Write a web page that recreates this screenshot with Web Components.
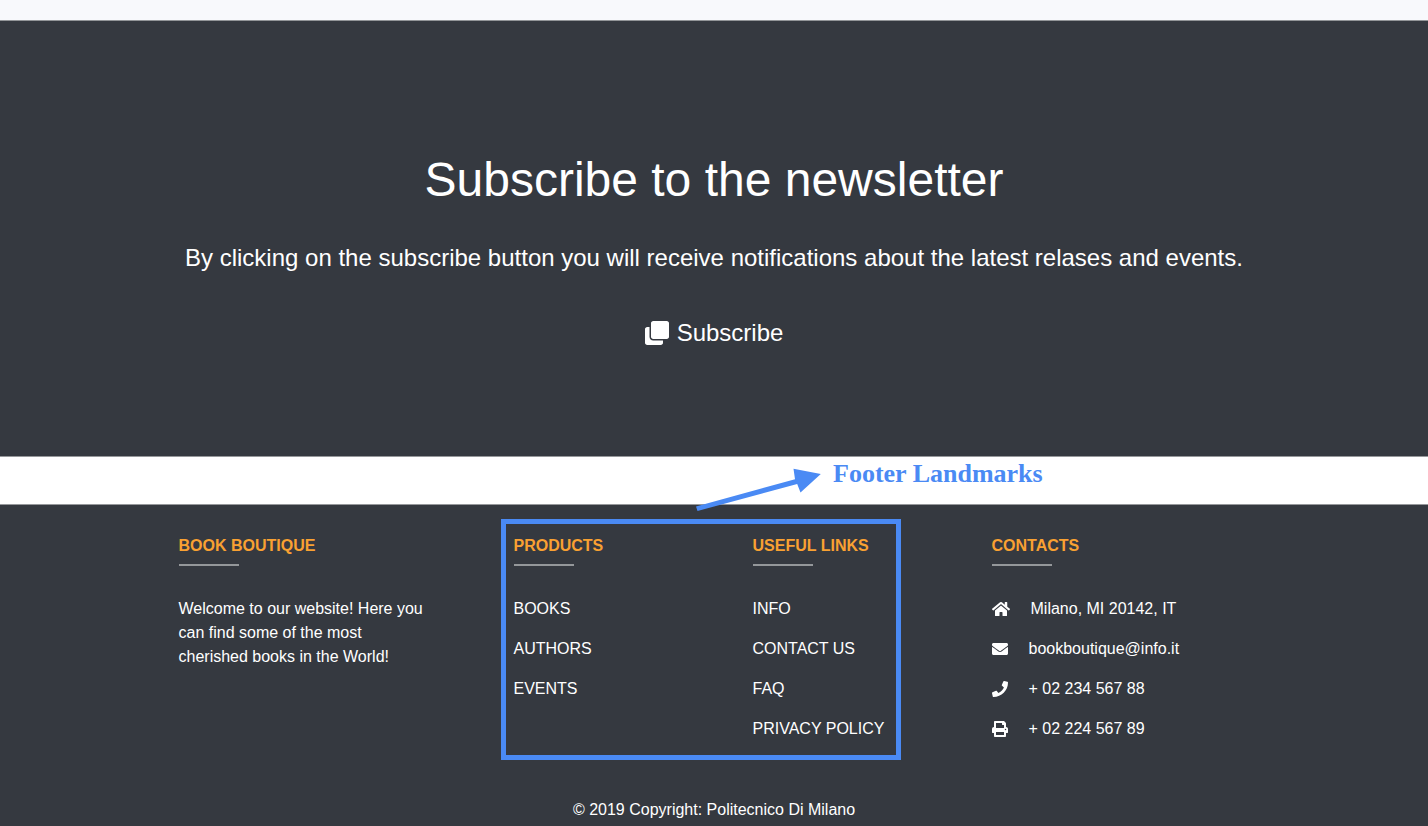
<!DOCTYPE html>
<html lang="en">
<head>
<meta charset="utf-8">
<meta name="viewport" content="width=device-width, initial-scale=1">
<title>Book Boutique</title>
<style>
body { margin: 0; background: #fff; color: #fff; font: 16px/24px "Liberation Sans", Arial, sans-serif; --dark: #353940; --accent: #f9a132; --note: #4a8af4; }
</style>
</head>
<body>
<book-page></book-page>
<script>
const define = (name, html) => {
  const t = document.createElement('template');
  t.innerHTML = html;
  customElements.define(name, class extends HTMLElement {
    constructor() {
      super();
      this.attachShadow({ mode: 'open' }).append(t.content.cloneNode(true));
    }
  });
};

const ICONS = {
  clone: ['0 0 512 512', 'M464 0c26.51 0 48 21.49 48 48v288c0 26.51-21.49 48-48 48H176c-26.51 0-48-21.49-48-48V48c0-26.51 21.49-48 48-48h288M176 416c-44.112 0-80-35.888-80-80V128H48c-26.51 0-48 21.49-48 48v288c0 26.51 21.49 48 48 48h288c26.51 0 48-21.49 48-48v-48H176z'],
  home: ['0 0 576 512', 'M280.37 148.26L96 300.11V464a16 16 0 0 0 16 16l112.06-.29a16 16 0 0 0 15.92-16V368a16 16 0 0 1 16-16h64a16 16 0 0 1 16 16v95.64a16 16 0 0 0 16 16.05L464 480a16 16 0 0 0 16-16V300L295.67 148.26a12.19 12.19 0 0 0-15.3 0zM571.6 251.47L488 182.56V44.05a12 12 0 0 0-12-12h-56a12 12 0 0 0-12 12v72.61L318.47 43a48 48 0 0 0-61 0L4.34 251.47a12 12 0 0 0-1.6 16.9l25.5 31A12 12 0 0 0 45.15 301l235.22-193.74a12.19 12.19 0 0 1 15.3 0L530.9 301a12 12 0 0 0 16.9-1.6l25.5-31a12 12 0 0 0-1.7-16.93z'],
  envelope: ['0 0 512 512', 'M502.3 190.8c3.9-3.1 9.7-.2 9.7 4.7V400c0 26.5-21.5 48-48 48H48c-26.5 0-48-21.5-48-48V195.6c0-5 5.7-7.8 9.7-4.7 22.4 17.4 52.1 39.5 154.1 113.6 21.1 15.4 56.7 47.8 92.2 47.6 35.7.3 72-32.8 92.3-47.6 102-74.1 131.6-96.3 154-113.7zM256 320c23.2.4 56.6-29.2 73.4-41.4 132.7-96.3 142.8-104.7 173.4-128.7 5.8-4.5 9.2-11.5 9.2-18.9v-19c0-26.5-21.5-48-48-48H48c-26.5 0-48 21.5-48 48v19c0 7.4 3.4 14.3 9.2 18.9 30.6 23.9 40.7 32.4 173.4 128.7 16.8 12.2 50.2 41.8 73.4 41.4z'],
  phone: ['0 0 512 512', 'M493.4 24.6l-104-24c-11.3-2.6-22.9 3.3-27.5 13.9l-48 112c-4.2 9.8-1.4 21.3 6.9 28l60.6 49.6c-36 76.7-98.9 140.5-177.2 177.2l-49.6-60.6c-6.8-8.3-18.2-11.1-28-6.9l-112 48C3.9 366.5-2 378.1.6 389.4l24 104C27.1 504.2 36.7 512 48 512c256.1 0 464-207.5 464-464 0-11.2-7.7-20.9-18.6-23.4z'],
  print: ['0 0 512 512', 'M448 192V77.25c0-8.49-3.37-16.62-9.37-22.63L393.37 9.37c-6-6-14.14-9.37-22.63-9.37H96C78.33 0 64 14.33 64 32v160c-35.35 0-64 28.65-64 64v112c0 8.84 7.16 16 16 16h48v96c0 17.67 14.33 32 32 32h320c17.67 0 32-14.33 32-32v-96h48c8.84 0 16-7.16 16-16V256c0-35.35-28.65-64-64-64zm-64 256H128v-96h256v96zm0-224H128V64h192v48c0 8.84 7.16 16 16 16h48v96zm48 72c-13.25 0-24-10.75-24-24 0-13.26 10.75-24 24-24s24 10.74 24 24c0 13.25-10.75 24-24 24z']
};

customElements.define('fa-icon', class extends HTMLElement {
  constructor() { super(); this.attachShadow({ mode: 'open' }); }
  connectedCallback() {
    const [box, d] = ICONS[this.getAttribute('name')];
    this.shadowRoot.innerHTML = `<style>:host{display:inline-flex;flex:none}svg{height:1em;fill:currentColor}</style>
      <svg viewBox="${box}" aria-hidden="true"><path d="${d}"/></svg>`;
  }
});

define('newsletter-banner', `
<style>
:host { display: block; background: var(--dark); text-align: center; padding: 127px 32px 101px; }
h1 { margin: 0; font-weight: 400; font-size: 48px; line-height: 64px; }
p { margin: 30px 0 37px; font-size: 24px; line-height: 32px; }
button { all: unset; display: inline-flex; align-items: center; gap: 8px; font-size: 24px; line-height: 32px; padding: 6px 12px; cursor: pointer; }
</style>
<h1><slot name="title"></slot></h1>
<p><slot></slot></p>
<button type="button"><fa-icon name="clone"></fa-icon>Subscribe</button>`);

define('note-band', `
<style>
:host { display: block; position: relative; height: 49px; box-sizing: border-box; border: solid #96989b; border-width: 1px 0; color: var(--note); }
svg { position: absolute; left: calc(50% - 20px); top: 11px; z-index: 1; fill: var(--note); }
span { position: absolute; left: calc(50% + 119px); top: 1px; font: bold 26px/32px "Liberation Serif", serif; white-space: nowrap; }
</style>
<svg width="130" height="46" viewBox="0 0 130 46" aria-hidden="true"><path d="M2 38.500L101 11.200L99.500 .800L126.800 6L106.500 24.500L103.200 16L3.500 43Z"/></svg>
<span><slot></slot></span>`);

define('footer-column', `
<style>
:host { display: block; }
h2 { margin: 0; font-size: 16px; line-height: 24px; color: var(--accent); text-transform: uppercase; white-space: nowrap; }
hr { width: 60px; height: 2px; margin: 6px 0 31px; border: 0; background: #94979a; }
div { display: grid; gap: 16px; }
</style>
<h2><slot name="title"></slot></h2><hr><div><slot></slot></div>`);

define('footer-link', `
<style>
:host { display: block; white-space: nowrap; }
a { color: inherit; text-decoration: none; }
</style>
<a href="#"><slot></slot></a>`);

customElements.define('contact-row', class extends HTMLElement {
  constructor() { super(); this.attachShadow({ mode: 'open' }); }
  connectedCallback() {
    this.shadowRoot.innerHTML = `<style>
      :host { display: flex; align-items: center; gap: 21px; white-space: nowrap; }
      </style><fa-icon name="${this.getAttribute('icon')}"></fa-icon><span><slot></slot></span>`;
  }
});

define('site-footer', `
<style>
:host { display: block; background: var(--dark); padding: 14px 12.5% 4px; }
.cols { display: grid; grid-template-columns: 322fr 400fr 91fr 258fr; align-items: start; }
.side { padding-top: 15px; }
.side:last-child { grid-column: 4; }
nav { display: grid; grid-template-columns: 239fr 135fr; border: 5px solid var(--note); padding: 10px 8px 14px; }
p { margin: 0; max-width: 256px; }
small { display: block; margin-top: 38px; font-size: 16px; text-align: center; }
</style>
<div class="cols">
  <footer-column class="side"><span slot="title">Book Boutique</span><p>Welcome to our website! Here you can find some of the most cherished books in the World!</p></footer-column>
  <nav aria-label="Footer">
    <footer-column><span slot="title">Products</span>
      <footer-link>BOOKS</footer-link><footer-link>AUTHORS</footer-link><footer-link>EVENTS</footer-link></footer-column>
    <footer-column><span slot="title">Useful links</span>
      <footer-link>INFO</footer-link><footer-link>CONTACT US</footer-link><footer-link>FAQ</footer-link><footer-link>PRIVACY POLICY</footer-link></footer-column>
  </nav>
  <footer-column class="side"><span slot="title">Contacts</span>
    <contact-row icon="home">Milano, MI 20142, IT</contact-row>
    <contact-row icon="envelope">bookboutique@info.it</contact-row>
    <contact-row icon="phone">+ 02 234 567 88</contact-row>
    <contact-row icon="print">+ 02 224 567 89</contact-row></footer-column>
</div>
<small>© 2019 Copyright: Politecnico Di Milano</small>`);

define('book-page', `
<style>
:host { display: block; }
.strip { height: 20px; background: #f8f9fc; border-bottom: 1px solid #939699; }
</style>
<div class="strip"></div>
<main>
  <newsletter-banner><span slot="title">Subscribe to the newsletter</span>By clicking on the subscribe button you will receive notifications about the latest relases and events.</newsletter-banner>
</main>
<note-band>Footer Landmarks</note-band>
<footer><site-footer></site-footer></footer>`);
</script>
</body>
</html>
